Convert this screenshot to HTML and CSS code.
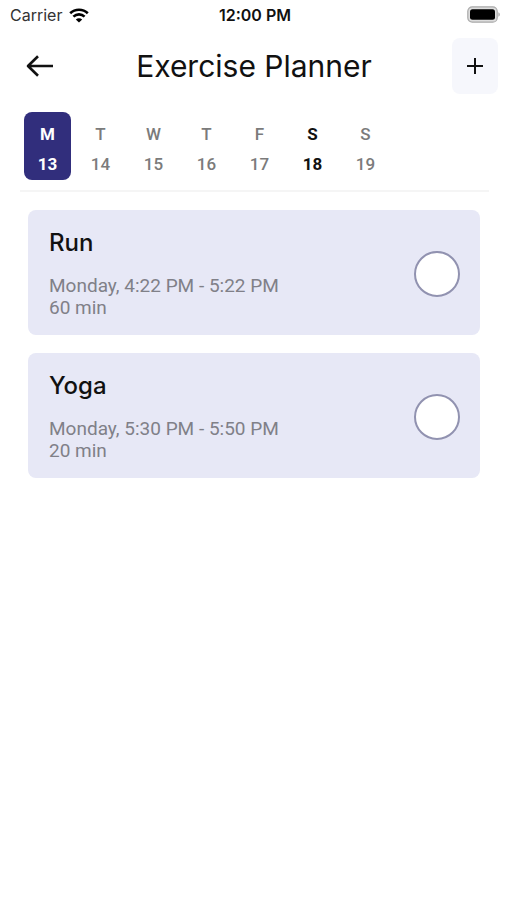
FILE: index.html
```html
<!DOCTYPE html>
<html lang="en">
<head>
<meta charset="utf-8">
<meta name="viewport" content="width=device-width, initial-scale=1">
<title>Exercise Planner</title>
<link rel="stylesheet" href="styles.css">
</head>
<body>
<div class="status">
  <div class="carrier"><span>Carrier</span>
    <svg width="20" height="15" viewBox="0 0 20 15" fill="none" stroke="#000" stroke-width="2.6" aria-hidden="true">
      <path d="M1.2 5.2C6 .5 14 .5 18.800 5.200M4.400 8.600c3.200-3 8-3 11.200 0"/>
      <path d="M10 14.500 6.800 11.400c1.800-1.600 4.600-1.600 6.400 0z" fill="#000" stroke="none"/>
    </svg>
  </div>
  <span class="clock">12:00 PM</span>
  <svg class="battery" width="33" height="18" viewBox="0 0 33 18" aria-hidden="true">
    <rect x=".8" y=".8" width="29.400" height="15.400" rx="4.500" fill="#ddd" stroke="#aaa" stroke-width="1.200"/>
    <rect x="3" y="3.200" width="25" height="10.600" rx="2.500" fill="#000"/>
    <path d="M31.400 6.300c1.900.8 1.900 3.600 0 4.400z" fill="#aaa"/>
  </svg>
</div>
<header class="header">
  <button class="back" aria-label="Back">
    <svg width="28" height="22" viewBox="0 0 28 22" fill="none" stroke="#111" stroke-width="2.600" stroke-linejoin="round" aria-hidden="true"><path d="M27 11H2M12 1.200 2 11l10 9.800"/></svg>
  </button>
  <h1>Exercise Planner</h1>
  <button class="add" aria-label="Add exercise">
    <svg width="16" height="16" viewBox="0 0 16 16" stroke="#111" stroke-width="2" aria-hidden="true"><path d="M8 0v16M0 8h16"/></svg>
  </button>
</header>
<nav class="week" aria-label="Week">
  <button class="day selected"><span>M</span><span>13</span></button>
  <button class="day"><span>T</span><span>14</span></button>
  <button class="day"><span>W</span><span>15</span></button>
  <button class="day"><span>T</span><span>16</span></button>
  <button class="day"><span>F</span><span>17</span></button>
  <button class="day today"><span>S</span><span>18</span></button>
  <button class="day"><span>S</span><span>19</span></button>
</nav>
<main class="list">
  <article class="card">
    <div>
      <h2><label for="run">Run</label></h2>
      <p>Monday, 4:22 PM - 5:22 PM</p>
      <p>60 min</p>
    </div>
    <input type="checkbox" id="run">
  </article>
  <article class="card">
    <div>
      <h2><label for="yoga">Yoga</label></h2>
      <p>Monday, 5:30 PM - 5:50 PM</p>
      <p>20 min</p>
    </div>
    <input type="checkbox" id="yoga">
  </article>
</main>
</body>
</html>
```
FILE: styles.css
```css
* { box-sizing: border-box; }
body {
  margin: 0;
  background: #fff;
  color: #111;
  font-family: Inter, "Liberation Sans", sans-serif;
}
h1, h2, p { margin: 0; }
button { border: 0; padding: 0; background: none; color: inherit; font: inherit; cursor: pointer; }
svg { display: block; }

.status {
  display: grid;
  grid-template-columns: 1fr auto 1fr;
  align-items: center;
  height: 30px;
  padding: 0 7px 0 10px;
  font-size: 16px;
}
.carrier { display: flex; align-items: center; gap: 7px; color: #333; }
.clock { font-weight: 600; }
.battery { justify-self: end; }

.header {
  display: grid;
  grid-template-columns: 60px 1fr 46px;
  align-items: center;
  padding: 8px 9px 0 10px;
}
.header h1 {
  padding-right: 14px;
  font-size: 30px;
  font-weight: 400;
  line-height: 36px;
  text-align: center;
}
.back { display: flex; align-items: center; justify-content: center; height: 56px; }
.add {
  display: flex;
  align-items: center;
  justify-content: center;
  height: 56px;
  border-radius: 8px;
  background: #f6f7fc;
}

.week {
  display: flex;
  gap: 6px;
  margin: 18px 18px 0 20px;
  padding: 0 4px 10px;
  border-bottom: 2px solid #f5f5f5;
}
.day {
  display: flex;
  flex-direction: column;
  align-items: center;
  gap: 10px;
  width: 47px;
  padding: 12px 0 6px;
  border-radius: 8px;
  color: #7b7b7b;
  font-family: Roboto, "Liberation Sans", sans-serif;
  font-size: 17px;
  font-weight: 500;
  line-height: 20px;
}
.selected { background: #312e7c; color: #fff; font-weight: 700; }
.today { color: #111; font-weight: 700; }

.list { display: grid; gap: 18px; padding: 18px 27px 18px 28px; }
.card {
  display: flex;
  align-items: center;
  justify-content: space-between;
  padding: 18px 20px 16px 21px;
  border-radius: 8px;
  background: #e7e8f6;
}
.card h2 { margin-bottom: 18px; font-size: 24px; font-weight: 500; line-height: 29px; }
.card p {
  color: #808088;
  font-family: Roboto, "Liberation Sans", sans-serif;
  font-size: 19px;
  line-height: 22px;
}
.card input {
  appearance: none;
  flex: none;
  width: 46px;
  height: 46px;
  margin: 0;
  border: 2px solid #9192b0;
  border-radius: 50%;
  background: #fff;
}
.card input:checked { background: #312e7c; }
```
